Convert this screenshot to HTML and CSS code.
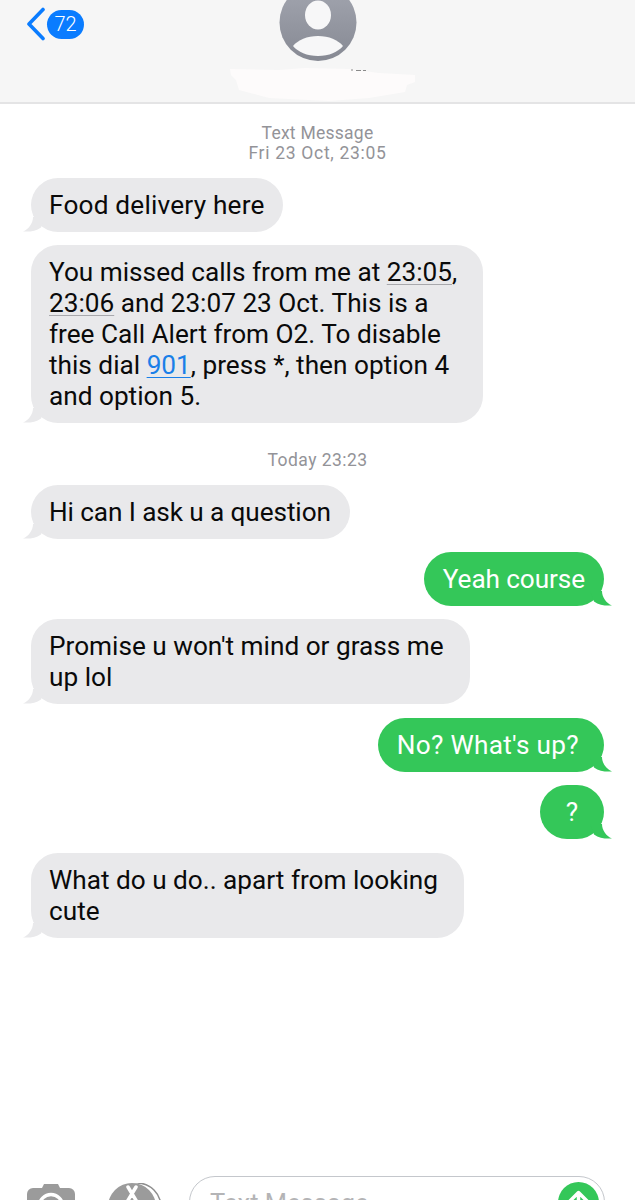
FILE: index.html
```html
<!DOCTYPE html>
<html lang="en">
<head>
<meta charset="utf-8">
<title>Messages</title>
<link rel="stylesheet" href="styles.css">
</head>
<body>
<div class="page">
  <header class="topbar">
    <div class="back">
      <svg class="chevron" width="21" height="34" viewBox="0 0 21 34"><path d="M18 2.5 4 17l14 14.5" fill="none" stroke="#0a7cff" stroke-width="3.6" stroke-linecap="round" stroke-linejoin="round"/></svg>
      <span class="badge">72</span>
    </div>
    <svg class="avatar" width="78" height="62" viewBox="0 0 78 62">
      <defs>
        <linearGradient id="av" x1="0" y1="0" x2="0" y2="1"><stop offset="0" stop-color="#a3a6b0"/><stop offset="1" stop-color="#868993"/></linearGradient>
        <clipPath id="avc"><circle cx="39" cy="22.5" r="38.5"/></clipPath>
      </defs>
      <circle cx="39" cy="22.5" r="38.5" fill="url(#av)"/>
      <g clip-path="url(#avc)" fill="#f7f7f8">
        <ellipse cx="39" cy="15" rx="13" ry="14.5"/>
        <path d="M14 46C19 40 28 36 39 36s20 4 25 10c-5 6-14 10-25 10s-20-4-25-10z"/>
      </g>
    </svg>
    <svg class="smudge" width="190" height="36" viewBox="0 0 190 36">
      <path d="M1 2 50 3 76 1 120 2 150 6 186 8 186 15 178 18 176 25 140 31 100 34 40 31 10 23 7 13 2 8z" fill="#fdfbfb"/>
      <path d="M122 3h2M127 3.5h5M134 3.500h3" stroke="#8a8a8a" stroke-width="1"/>
    </svg>
  </header>

  <main class="thread">
    <p class="stamp stamp-first"><span class="stamp-label">Text Message</span><br><span class="stamp-date">Fri 23 Oct, 23:05</span></p>

    <div class="bubble in loose">Food delivery here<svg class="tail" width="22" height="15" viewBox="0 0 22 15"><path d="M10 0C10 6 6 12 0 14.500c7 .5 13-.5 18-4L22 0z" fill="#e9e9eb"/></svg></div>
    <div class="bubble in multi">You missed calls from me at <span class="detected">23:05</span>,<br><span class="detected">23:06</span> and 23:07 23 Oct. This is a<br>free Call Alert from O2. To disable<br>this dial <a class="link">901</a>, press *, then option 4<br>and option 5.<svg class="tail" width="22" height="15" viewBox="0 0 22 15"><path d="M10 0C10 6 6 12 0 14.500c7 .5 13-.5 18-4L22 0z" fill="#e9e9eb"/></svg></div>

    <p class="stamp stamp-today"><span class="stamp-time">Today 23:23</span></p>

    <div class="bubble in tight">Hi can I ask u a question<svg class="tail" width="22" height="15" viewBox="0 0 22 15"><path d="M10 0C10 6 6 12 0 14.500c7 .5 13-.5 18-4L22 0z" fill="#e9e9eb"/></svg></div>
    <div class="bubble out tight">Yeah course<svg class="tail" width="22" height="15" viewBox="0 0 22 15"><path d="M12 0C12 6 16 12 22 14.500c-7 .5-13-.5-18-4L0 0z" fill="#34c759"/></svg></div>
    <div class="bubble in multi">Promise u won't mind or grass me<br>up lol<svg class="tail" width="22" height="15" viewBox="0 0 22 15"><path d="M10 0C10 6 6 12 0 14.500c7 .5 13-.5 18-4L22 0z" fill="#e9e9eb"/></svg></div>
    <div class="bubble out spaced loose-end">No? What's up?<svg class="tail" width="22" height="15" viewBox="0 0 22 15"><path d="M12 0C12 6 16 12 22 14.500c-7 .5-13-.5-18-4L0 0z" fill="#34c759"/></svg></div>
    <div class="bubble out single">?<svg class="tail" width="22" height="15" viewBox="0 0 22 15"><path d="M12 0C12 6 16 12 22 14.500c-7 .5-13-.5-18-4L0 0z" fill="#34c759"/></svg></div>
    <div class="bubble in multi spaced">What do u do.. apart from looking<br>cute<svg class="tail" width="22" height="15" viewBox="0 0 22 15"><path d="M10 0C10 6 6 12 0 14.500c7 .5 13-.5 18-4L22 0z" fill="#e9e9eb"/></svg></div>
  </main>

  <footer class="composer">
    <svg class="cam" width="48" height="40" viewBox="0 0 48 40"><path d="M6 4h9l2-4h14l2 4h9a6 6 0 0 1 6 6v24a6 6 0 0 1-6 6H6a6 6 0 0 1-6-6V10a6 6 0 0 1 6-6z" fill="#9b9b9b"/><circle cx="24" cy="22" r="11.500" fill="none" stroke="#fff" stroke-width="3.500"/></svg>
    <svg class="apps" width="54" height="40" viewBox="0 0 54 40">
      <circle cx="29" cy="24" r="24" fill="none" stroke="#8e8e8e" stroke-width="1.500"/>
      <circle cx="24" cy="24" r="24" fill="#fff"/>
      <circle cx="24" cy="24" r="24" fill="#9b9b9b"/>
      <path d="M20 4 32 24M28 4 16 24M11 24h26" stroke="#fff" stroke-width="3.500" fill="none" stroke-linecap="round"/>
    </svg>
    <div class="field">
      <span class="placeholder">Text Message</span>
      <svg class="send" width="41" height="41" viewBox="0 0 41 41"><circle cx="20.500" cy="20.500" r="20.500" fill="#34c759"/><path d="M20.500 31V11M12 19l8.500-8.500L29 19" fill="none" stroke="#fff" stroke-width="3.500" stroke-linecap="round" stroke-linejoin="round"/></svg>
    </div>
  </footer>
</div>
</body>
</html>
```

FILE: styles.css
```css
* { box-sizing: border-box; }

html, body {
  margin: 0;
  padding: 0;
  background: #fff;
}

.page {
  width: 635px;
  height: 1200px;
  overflow: hidden;
  display: flex;
  flex-direction: column;
  font-family: Roboto, "Liberation Sans", sans-serif;
}

.topbar {
  position: relative;
  height: 104px;
  flex: none;
  background: #f6f6f6;
  border-bottom: 2px solid #e4e4e5;
}

.back {
  display: flex;
  align-items: center;
  gap: 1px;
  padding: 7px 0 0 25px;
}

.chevron { flex: none; }

.badge {
  width: 37px;
  height: 29px;
  border-radius: 15px;
  background: #0a7cff;
  color: #fff;
  font-size: 20px;
  font-weight: 300;
  line-height: 29px;
  text-align: center;
}

.avatar {
  position: absolute;
  left: 279px;
  top: 0;
}

.smudge {
  position: absolute;
  left: 229px;
  top: 67px;
}

.thread {
  display: flex;
  flex-direction: column;
  gap: 13px;
  padding: 0 31px;
}

.stamp {
  margin: 0;
  text-align: center;
  color: #939398;
  font-size: 17.5px;
  line-height: 20px;
}

.stamp-first { padding-top: 19px; margin-bottom: 2px; }
.stamp-today { padding-top: 14px; margin-bottom: 2px; }
.stamp-label { letter-spacing: 0.25px; }
.stamp-date { letter-spacing: 0.7px; }
.stamp-time { letter-spacing: 0.45px; }

.bubble {
  position: relative;
  padding: 12px 19px 11px;
  border-radius: 27px;
  font-size: 26.2px;
  line-height: 31px;
}

.bubble.in { padding-left: 18px; }
.bubble.multi { padding-right: 26px; }
.bubble.spaced { margin-top: 1px; }
.bubble.single { min-width: 64px; text-align: center; }
.bubble.loose { letter-spacing: 0.2px; padding-right: 18px; }
.bubble.loose-end { letter-spacing: 0.3px; padding-right: 25px; }
.bubble.tight { letter-spacing: -0.1px; }

.bubble.in {
  align-self: flex-start;
  background: #e9e9eb;
  color: #0a0a0a;
}

.bubble.out {
  align-self: flex-end;
  background: #34c759;
  color: #fff;
}

.bubble .tail {
  position: absolute;
  bottom: 0;
}

.bubble.in .tail { left: -8px; }
.bubble.out .tail { right: -8px; }

.detected {
  text-decoration: underline;
  text-decoration-color: #a8a8ac;
  text-decoration-thickness: 1px;
  text-underline-offset: 3px;
}

.link {
  color: #1a7fe8;
  text-decoration: underline;
  text-decoration-thickness: 1px;
  text-underline-offset: 3px;
}

.composer {
  margin-top: auto;
  height: 24px;
  flex: none;
  display: flex;
  align-items: flex-start;
  padding-left: 27px;
  overflow: hidden;
}

.cam {
  flex: none;
  margin-top: 8px;
}

.apps {
  flex: none;
  margin: 7px 0 0 33px;
}

.field {
  position: relative;
  width: 416px;
  height: 60px;
  margin-left: 27px;
  border: 1px solid #c4c7cc;
  border-radius: 26px;
  padding: 11px 0 0 20px;
}

.placeholder {
  color: #b4b4b6;
  font-size: 25.5px;
  line-height: 31px;
}

.send {
  position: absolute;
  right: 5px;
  top: 5px;
}
```
